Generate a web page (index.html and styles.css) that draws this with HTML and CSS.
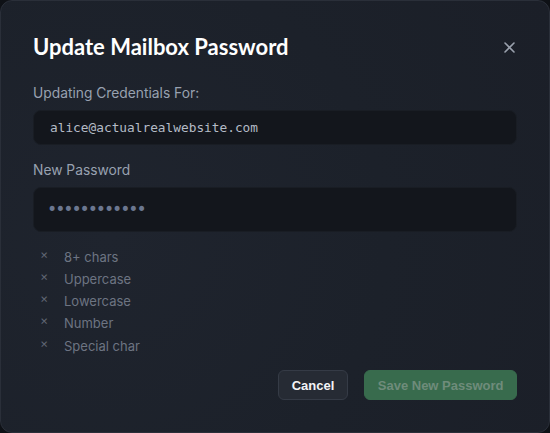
FILE: index.html
```html
<!DOCTYPE html>
<html lang="en">
<head>
    <meta charset="UTF-8">
    <meta name="viewport" content="width=device-width, initial-scale=1.0">
    <title>Update Mailbox Password</title>
    <link rel="stylesheet" href="styles.css">
</head>
<body>
    <div class="modal">
        <header class="modal-header">
            <h1>Update Mailbox Password</h1>
            <button class="close-btn" aria-label="Close">
                <svg width="11" height="11" viewBox="0 0 11 11">
                    <path d="M1 1 L10 10 M10 1 L1 10" stroke="currentColor" stroke-width="1.6" stroke-linecap="round"/>
                </svg>
            </button>
        </header>

        <label class="field-label" for="mailbox">Updating Credentials For:</label>
        <input class="field email" id="mailbox" type="text" value="alice@actualrealwebsite.com" readonly>

        <label class="field-label second" for="new-password">New Password</label>
        <input class="field password" id="new-password" type="password" value="abcdefghijkl">

        <!-- password requirements -->
        <ul class="rules">
            <li><span class="mark">&times;</span>8+ chars</li>
            <li><span class="mark">&times;</span>Uppercase</li>
            <li><span class="mark">&times;</span>Lowercase</li>
            <li><span class="mark">&times;</span>Number</li>
            <li><span class="mark">&times;</span>Special char</li>
        </ul>

        <div class="actions">
            <button class="btn btn-cancel">Cancel</button>
            <button class="btn btn-save" disabled>Save New Password</button>
        </div>
    </div>
</body>
</html>
```

FILE: styles.css
```css
html, body {
    margin: 0;
    padding: 0;
    height: 100%;
}

body {
    background-color: #0e1116;
    font-family: 'Inter', sans-serif;
    color: #e5e7eb;
}

.modal {
    box-sizing: border-box;
    height: 100%;
    display: flex;
    flex-direction: column;
    padding: 32px 32px 32px 32px;
    background: radial-gradient(circle at 20% 55%, #1f242e 0%, #1c212a 55%, #1b1f28 100%);
    border: 1px solid #2a2f39;
    border-radius: 12px;
}

.modal-header {
    display: flex;
    align-items: center;
    justify-content: space-between;
    margin-bottom: 22px;
}

.modal-header h1 {
    margin: 0;
    font-family: 'Lato', sans-serif;
    font-weight: 700;
    font-size: 22px;
    line-height: 28px;
    color: #ffffff;
}

.close-btn {
    background: none;
    border: none;
    padding: 0;
    margin-right: 2px;
    color: #9aa1ad;
    display: flex;
    cursor: pointer;
}

.field-label {
    font-size: 13.8px;
    line-height: 20px;
    color: #98a1b0;
    margin-bottom: 7px;
}

.field-label.second {
    margin-top: 15px;
}

.field {
    box-sizing: border-box;
    width: 100%;
    background-color: #13161c;
    border: 1px solid #191d24;
    border-radius: 8px;
    padding: 0 16px;
    outline: none;
}

.field.email {
    height: 35px;
    font-family: 'DejaVu Sans Mono', monospace;
    font-size: 12.8px;
    color: #b4bbc6;
}

.field.password {
    height: 45px;
    padding-left: 13px;
    font-family: 'DejaVu Sans Mono', monospace;
    font-size: 17px;
    letter-spacing: -2.1px;
    color: #6b7790;
}

.rules {
    list-style: none;
    margin: 14px 0 0 0;
    padding: 0 0 0 7px;
}

.rules li {
    display: flex;
    align-items: center;
    font-size: 13px;
    line-height: 22.3px;
    color: #6d7482;
}

.rules .mark {
    width: 24px;
    font-size: 12.5px;
    color: #5f6673;
    position: relative;
    top: -2px;
}

.actions {
    display: flex;
    justify-content: flex-end;
    gap: 16px;
    margin-top: 13px;
}

.btn {
    height: 30px;
    border-radius: 6px;
    font-family: 'Liberation Sans', Arial, sans-serif;
    font-weight: 700;
    font-size: 13px;
    padding: 0 13px;
    cursor: pointer;
}

.btn-cancel {
    background-color: #262b34;
    border: 1px solid #353b46;
    color: #f3f4f6;
}

.btn-cancel:hover {
    background-color: #2e343e;
}

.btn-save {
    background-color: #386b4d;
    border: 1px solid #386b4d;
    color: #6f8c7b;
    padding: 0 12.5px;
    cursor: not-allowed;
}
```
